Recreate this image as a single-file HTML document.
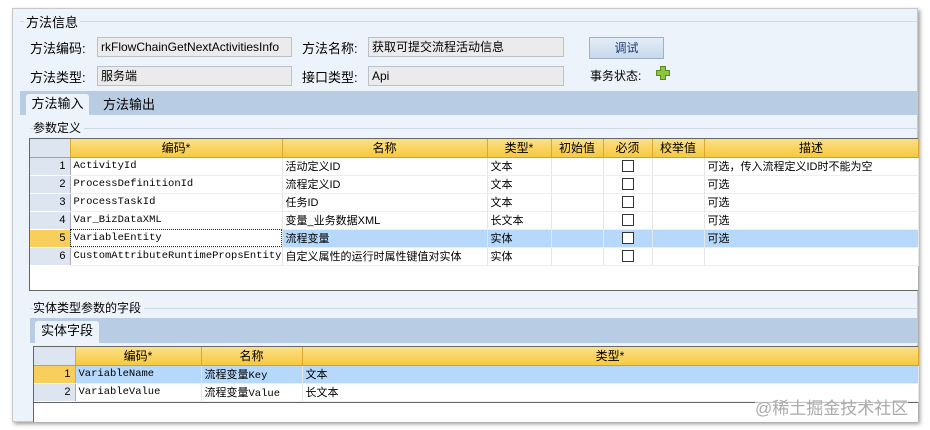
<!DOCTYPE html>
<html><head><meta charset="utf-8"><style>
*{box-sizing:border-box;margin:0;padding:0}
body{width:930px;height:430px;background:#fff;position:relative;overflow:hidden;font-family:"Liberation Sans","Noto Sans CJK SC",sans-serif;font-size:12px;color:#000}
.a{position:absolute}
.win{left:12px;top:8px;width:906px;height:414px;background:#edf3fa;border:1px solid #c8c8c8;box-shadow:2px 2px 4px #999}
.inp{background:#ebebeb;border:1px solid #b9c2cc;height:20px;line-height:18px;padding-left:3px;font-size:12px;overflow:hidden;white-space:nowrap}
.lbl{font-size:12px}
.g{border-collapse:collapse;table-layout:fixed;font-size:11px}
.g td{height:18px;border-right:1px solid #e6e6e6;border-bottom:1px solid #eee;padding:0 3px;white-space:nowrap;overflow:hidden;background:#fff}
.g tr.h td{background:linear-gradient(#fbe08a,#f7c93e);border-right:1px solid #d8a830;border-bottom:1px solid #c9a040;text-align:center;font-size:12px}
.g td.n{background:#dde6f0;text-align:right;border-right:1px solid #aab;border-bottom:1px solid #fff;padding-right:4px}
.g tr.h td.n{background:#dde6f0}
.g tr.s td{background:#b5d8fb}
.g tr.s td.n{background:#f8cf5c}
.m{font-family:"Liberation Mono","DejaVu Sans Mono",monospace;font-size:10.5px}
.cb{display:inline-block;width:12px;height:12px;border:1px solid #333;background:#fff;vertical-align:middle}
</style></head><body>
<div class="a win"></div>
<div class="a" style="left:20px;top:21px;width:898px;border-top:1px solid #d0d8e2"></div>
<div class="a lbl" style="left:24px;top:12px;background:#edf3fa;padding:0 2px;font-size:13px">方法信息</div>
<div class="a lbl" style="left:30px;top:38px;font-size:13px">方法编码:</div>
<div class="a inp" style="left:97px;top:37px;width:195px">rkFlowChainGetNextActivitiesInfo</div>
<div class="a lbl" style="left:302px;top:38px;font-size:13px">方法名称:</div>
<div class="a inp" style="left:368px;top:37px;width:196px">获取可提交流程活动信息</div>
<div class="a" style="left:589px;top:37px;width:75px;height:22px;border:1px solid #9fb2c8;background:linear-gradient(#e4edf7,#c8d8ea);text-align:center;line-height:20px;color:#1a3c78">调试</div>
<div class="a lbl" style="left:30px;top:67px;font-size:13px">方法类型:</div>
<div class="a inp" style="left:97px;top:66px;width:195px">服务端</div>
<div class="a lbl" style="left:302px;top:67px;font-size:13px">接口类型:</div>
<div class="a inp" style="left:368px;top:66px;width:196px">Api</div>
<div class="a lbl" style="left:590px;top:67px">事务状态:</div>
<svg class="a" style="left:656px;top:66px" width="14" height="14"><path d="M4.5 0.5h5v4h4v5h-4v4h-5v-4h-4v-5h4z" fill="#8cc63e" stroke="#5a8a1c"/></svg>
<div class="a" style="left:20px;top:91px;width:898px;height:24px;background:#b8cce4"></div>
<div class="a" style="left:26px;top:94px;width:63px;height:22px;background:#edf3fa;border-radius:3px 3px 0 0;text-align:center;line-height:20px;font-size:13px">方法输入</div>
<div class="a" style="left:103px;top:94px;font-size:13px">方法输出</div>
<div class="a" style="left:30px;top:128px;width:888px;border-top:1px solid #d0d8e2"></div>
<div class="a" style="left:33px;top:119px;background:#edf3fa;padding-right:3px">参数定义</div>
<div class="a" style="left:29px;top:138px;width:889px;height:153px;background:#fff;border:1px solid #666;border-right:none"></div>
<table class="a g" style="left:30px;top:139px;width:888px">
<colgroup><col width="40"><col width="212"><col width="205"><col width="64"><col width="52"><col width="49"><col width="52"><col width="214"></colgroup>
<tr class="h"><td class="n"></td><td>编码*</td><td>名称</td><td>类型*</td><td>初始值</td><td>必须</td><td>校举值</td><td>描述</td></tr>
<tr><td class="n">1</td><td class="m">ActivityId</td><td>活动定义ID</td><td>文本</td><td></td><td style="text-align:center"><span class="cb"></span></td><td></td><td>可选，传入流程定义ID时不能为空</td></tr>
<tr><td class="n">2</td><td class="m">ProcessDefinitionId</td><td>流程定义ID</td><td>文本</td><td></td><td style="text-align:center"><span class="cb"></span></td><td></td><td>可选</td></tr>
<tr><td class="n">3</td><td class="m">ProcessTaskId</td><td>任务ID</td><td>文本</td><td></td><td style="text-align:center"><span class="cb"></span></td><td></td><td>可选</td></tr>
<tr><td class="n">4</td><td class="m">Var_BizDataXML</td><td>变量_业务数据XML</td><td>长文本</td><td></td><td style="text-align:center"><span class="cb"></span></td><td></td><td>可选</td></tr>
<tr class="s"><td class="n">5</td><td class="m" style="background:#fff;outline:1px dotted #333;outline-offset:-1px">VariableEntity</td><td>流程变量</td><td>实体</td><td></td><td style="text-align:center"><span class="cb"></span></td><td></td><td>可选</td></tr>
<tr><td class="n">6</td><td class="m">CustomAttributeRuntimePropsEntity</td><td>自定义属性的运行时属性键值对实体</td><td>实体</td><td></td><td style="text-align:center"><span class="cb"></span></td><td></td><td></td></tr>
</table>
<div class="a" style="left:30px;top:308px;width:888px;border-top:1px solid #d0d8e2"></div>
<div class="a" style="left:33px;top:299px;background:#edf3fa;padding-right:3px">实体类型参数的字段</div>
<div class="a" style="left:30px;top:318px;width:888px;height:25px;background:#b8cce4"></div>
<div class="a" style="left:35px;top:321px;width:64px;height:23px;background:#edf3fa;border-radius:3px 3px 0 0;text-align:center;line-height:20px;font-size:13px">实体字段</div>
<div class="a" style="left:33px;top:346px;width:885px;height:76px;background:#fff;border:1px solid #666;border-right:none;border-bottom:none"></div>
<div class="a" style="left:34px;top:402px;width:884px;border-top:1px solid #666"></div>
<table class="a g" style="left:34px;top:347px;width:884px">
<colgroup><col width="41"><col width="126"><col width="101"><col width="616"></colgroup>
<tr class="h"><td class="n"></td><td>编码*</td><td>名称</td><td>类型*</td></tr>
<tr class="s"><td class="n">1</td><td class="m">VariableName</td><td>流程变量<span class="m">Key</span></td><td>文本</td></tr>
<tr><td class="n">2</td><td class="m">VariableValue</td><td>流程变量<span class="m">Value</span></td><td>长文本</td></tr>
</table>
<div class="a" style="left:755px;top:394px;color:#aaa;font-size:17px;background:rgba(255,255,255,.6)">@稀土掘金技术社区</div>
</body></html>
